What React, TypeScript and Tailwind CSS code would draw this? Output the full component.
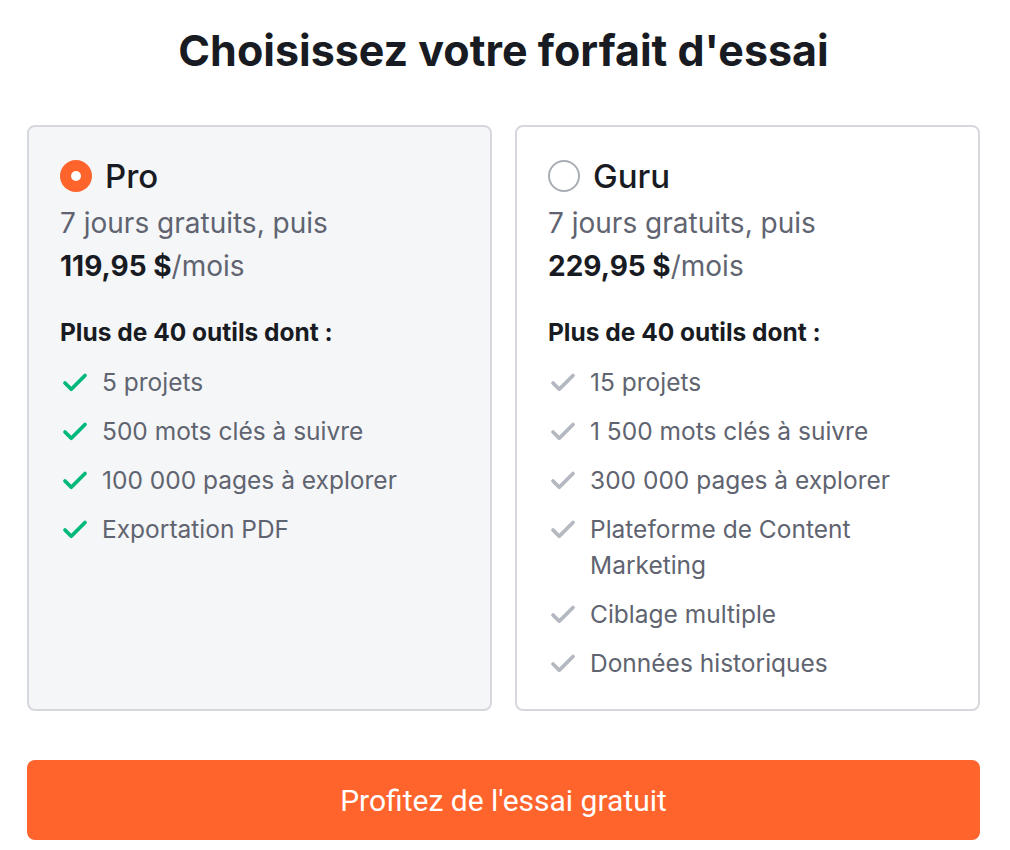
import { Check } from 'lucide-react'

type Plan = {
  nom: string
  prix: string
  outils: string[]
  actif: boolean
}

const plans: Plan[] = [
  {
    nom: 'Pro',
    prix: '119,95 $',
    outils: ['5 projets', '500 mots clés à suivre', '100 000 pages à explorer', 'Exportation PDF'],
    actif: true,
  },
  {
    nom: 'Guru',
    prix: '229,95 $',
    outils: [
      '15 projets',
      '1 500 mots clés à suivre',
      '300 000 pages à explorer',
      'Plateforme de Content Marketing',
      'Ciblage multiple',
      'Données historiques',
    ],
    actif: false,
  },
]

function Radio({ actif }: { actif: boolean }) {
  if (actif) {
    return (
      <span className="flex size-[32px] shrink-0 items-center justify-center rounded-full bg-[#ff642d]">
        <span className="size-[10px] rounded-full bg-white" />
      </span>
    )
  }
  return <span className="size-[32px] shrink-0 rounded-full border-2 border-[#a9adb6] bg-white" />
}

function CartePlan({ plan }: { plan: Plan }) {
  return (
    <div
      className={
        plan.actif
          ? 'rounded-lg border-2 border-[#d6d8dd] bg-[#f5f6f8] px-[31px] pb-[28px] pt-[31px]'
          : 'rounded-lg border-2 border-[#d6d8dd] bg-white px-[31px] pb-[28px] pt-[31px]'
      }
    >
      <div className="flex items-center gap-[13px]">
        <Radio actif={plan.actif} />
        <span className="text-[33px] font-medium leading-[36px] text-[#191b23]">{plan.nom}</span>
      </div>
      <p className="mt-[8px] text-[28px] leading-[43px] text-[#5f6470]">7 jours gratuits, puis</p>
      <p className="text-[28px] leading-[43px] text-[#5f6470]">
        <span className="font-bold text-[#191b23]">{plan.prix}</span>/mois
      </p>
      <p className="mt-[23px] text-[24.5px] font-bold leading-[42px] text-[#191b23]">Plus de 40 outils dont :</p>
      <ul className="mt-[11px] flex flex-col gap-[13px]">
        {plan.outils.map((o) => (
          <li key={o} className="flex items-start gap-[12px]">
            <Check
              strokeWidth={3}
              className={plan.actif ? 'mt-[4px] size-[30px] shrink-0 text-[#00b87a]' : 'mt-[4px] size-[30px] shrink-0 text-[#b4b8c0]'}
            />
            <span className="text-[24.5px] leading-[36px] text-[#5f6470]">{o}</span>
          </li>
        ))}
      </ul>
    </div>
  )
}

export default function App() {
  return (
    <div className="min-h-[850px] bg-white pl-[27px] pr-[30px] pt-[22px]" style={{ fontFamily: 'Inter, "Noto Sans", sans-serif' }}>
      <h1 className="text-center text-[43px] font-bold leading-[56px] text-[#191b23]">Choisissez votre forfait d'essai</h1>
      <div className="mt-[47px] grid grid-cols-2 gap-[23px]">
        {plans.map((p) => (
          <CartePlan key={p.nom} plan={p} />
        ))}
      </div>
      <button
        className="mt-[49px] flex h-[80px] w-full items-center justify-center rounded-lg bg-[#ff642d] text-[30px] text-white"
        style={{ fontFamily: 'Roboto, "Liberation Sans", sans-serif' }}
      >
        Profitez de l'essai gratuit
      </button>
    </div>
  )
}
